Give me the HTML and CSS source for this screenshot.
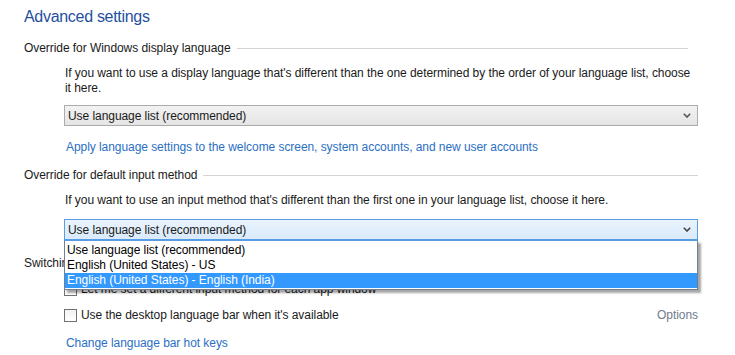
FILE: index.html
```html
<!DOCTYPE html>
<html lang="en">
<head>
    <meta charset="UTF-8">
    <meta name="viewport" content="width=device-width, initial-scale=1.0">
    <title>Advanced settings</title>
    <link rel="stylesheet" href="styles.css">
</head>
<body>
    <div class="page">
        <h1 class="title">Advanced settings</h1>

        <!-- 显示语言 -->
        <div class="group">
            <div class="groupHead short"><span>Override for Windows display language</span></div>
            <div class="groupBody">
                <p class="desc">If you want to use a display language that's different than the one determined by the order of your language list, choose it here.</p>
                <div class="combo">
                    <span>Use language list (recommended)</span>
                    <svg class="chev" width="8" height="5" viewBox="0 0 8 5"><polyline points="0.8,0.8 4,4 7.2,0.8" fill="none" stroke="#555" stroke-width="1.6"/></svg>
                </div>
                <a class="link" href="JavaScript:;">Apply language settings to the welcome screen, system accounts, and new user accounts</a>
            </div>
        </div>

        <!-- 默认输入法 -->
        <div class="group">
            <div class="groupHead"><span>Override for default input method</span></div>
            <div class="groupBody">
                <p class="desc">If you want to use an input method that's different than the first one in your language list, choose it here.</p>
                <div class="combo open">
                    <span>Use language list (recommended)</span>
                    <svg class="chev" width="8" height="5" viewBox="0 0 8 5"><polyline points="0.8,0.8 4,4 7.2,0.8" fill="none" stroke="#444" stroke-width="1.6"/></svg>
                    <ul class="dropList">
                        <li>Use language list (recommended)</li>
                        <li>English (United States) - US</li>
                        <li class="picked">English (United States) - English (India)</li>
                    </ul>
                </div>
            </div>
        </div>

        <!-- 切换输入法 -->
        <div class="group">
            <div class="groupHead"><span>Switching input methods</span></div>
            <div class="groupBody">
                <label class="check"><span class="box"></span>Let me set a different input method for each app window</label>
                <div class="checkRow">
                    <label class="check"><span class="box"></span>Use the desktop language bar when it's available</label>
                    <a class="options" href="JavaScript:;">Options</a>
                </div>
                <a class="link" href="JavaScript:;">Change language bar hot keys</a>
            </div>
        </div>
    </div>
</body>
</html>
```

FILE: styles.css
```css
body{
    margin: 0;
    background: #fff;
    font-family: "Liberation Sans", Arial, sans-serif;
    font-size: 12px;
    letter-spacing: -0.06px;
    color: #1a1a1a;
}
.page{
    width: 674px;
    padding: 6px 0 0 24px;
}
/* 标题 */
.title{
    margin: 0 0 12px;
    font-size: 16px;
    line-height: 22px;
    font-weight: normal;
    letter-spacing: -0.3px;
    color: #1f4fa0;
}
/* 每组的标题和分隔线 */
.groupHead{
    display: flex;
    align-items: center;
    gap: 6px;
    height: 16px;
}
.groupHead::after{
    content: "";
    flex: 1;
    height: 1px;
    background-color: #d5d5d5;
}
.groupHead.short{
    padding-right: 10px;
}
.groupBody{
    padding-left: 40px;
}
.desc{
    margin: 10px 0 0 1px;
    line-height: 15px;
}
/* 下拉框 */
.combo{
    position: relative;
    display: flex;
    align-items: center;
    justify-content: space-between;
    height: 19px;
    margin-top: 9px;
    padding: 0 6px 0 3px;
    border: 1px solid #acacac;
    background: linear-gradient(#f2f2f2, #e5e5e5);
}
.combo.open{
    margin-top: 11px;
    border-color: #569de5;
    background: linear-gradient(#eaf3fc, #d9eafb);
}
/* 展开的下拉列表 */
.dropList{
    position: absolute;
    left: -1px;
    right: -1px;
    top: calc(100% + 1px);
    margin: 0;
    padding: 2px 0 1px;
    list-style: none;
    background: #fff;
    border: 1px solid #6f7f94;
    border-top-color: #569de5;
    box-shadow: 3px 3px 2px rgba(0,0,0,0.35);
}
.dropList li{
    height: 15px;
    line-height: 15px;
    padding-left: 2px;
    color: #000;
}
.dropList .picked{
    background-color: #3399ff;
    color: #fff;
}
.link{
    display: block;
    margin: 13px 0 12px 2px;
    line-height: 16px;
    color: #2a6fc4;
    text-decoration: none;
}
.checkRow + .link{
    margin-top: 12px;
}
.group:nth-child(3){
    margin-bottom: 15px;
}
/* 复选框 */
.check{
    display: flex;
    align-items: center;
    gap: 4px;
    height: 16px;
    margin-top: 10px;
}
.box{
    width: 11px;
    height: 11px;
    border: 1px solid #707070;
    background: linear-gradient(#f3f3f3, #fff);
}
.checkRow{
    display: flex;
    justify-content: space-between;
    align-items: flex-end;
}
.options{
    line-height: 16px;
    color: #707b8c;
    text-decoration: none;
}
```
